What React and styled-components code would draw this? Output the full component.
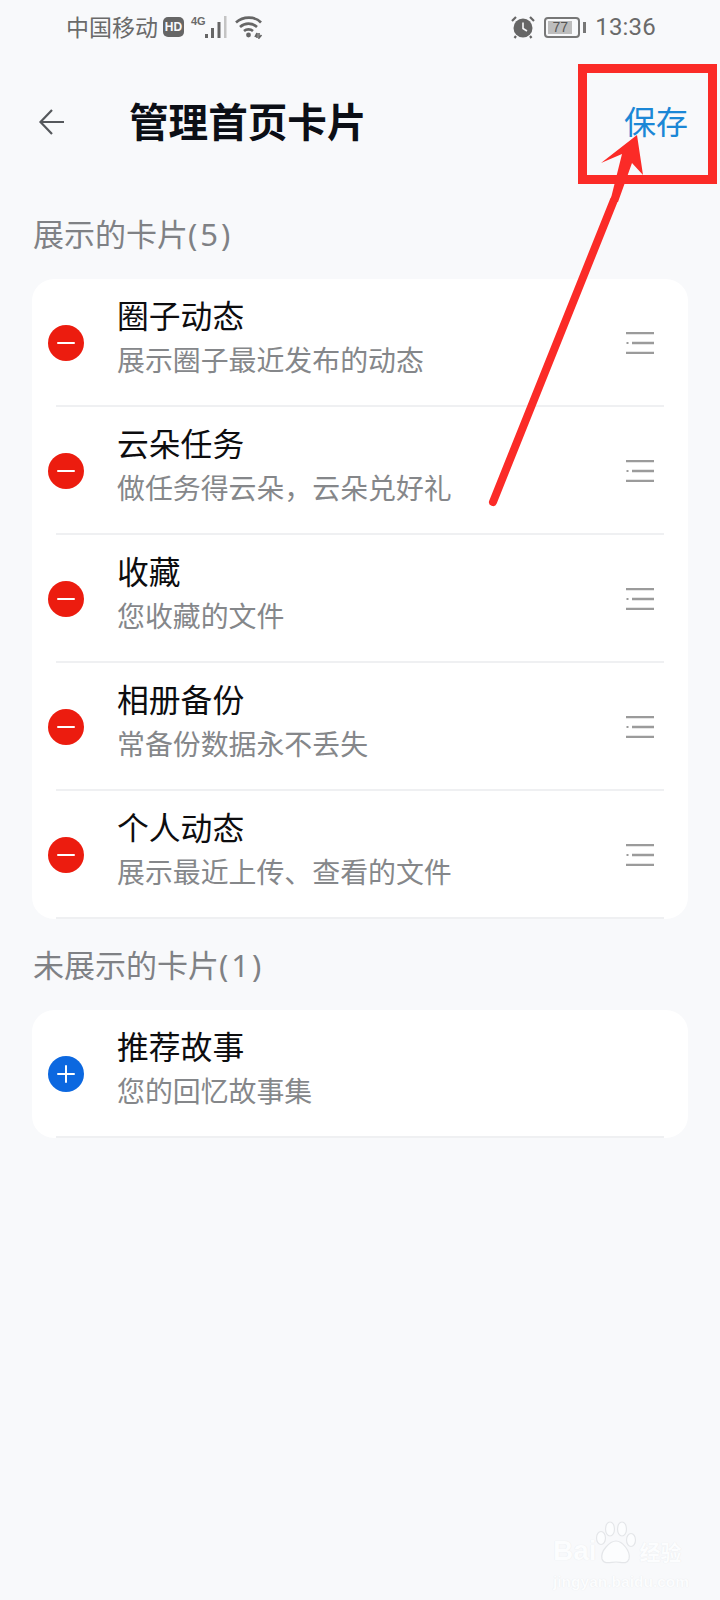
import React from "react";
import styled, { createGlobalStyle } from "styled-components";

const CJK = `"Noto Sans", "Noto Sans CJK SC", sans-serif`;

const GlobalStyle = createGlobalStyle`
  html, body {
    margin: 0;
    padding: 0;
    background: #f8f9fb;
  }
  * {
    box-sizing: border-box;
  }
`;

const Page = styled.div`
  position: relative;
  width: 720px;
  height: 1600px;
  overflow: hidden;
  background: #f8f9fb;
  font-family: ${CJK};
`;

const StatusBar = styled.div`
  display: flex;
  align-items: center;
  justify-content: space-between;
  height: 58px;
  padding: 6px 64px 10px 66px;
  color: #6a6a6a;
`;

const StatusGroup = styled.div`
  display: flex;
  align-items: center;
`;

const Carrier = styled.span`
  font-size: 23px;
  line-height: 30px;
`;

const HdBadge = styled.span`
  display: flex;
  align-items: center;
  justify-content: center;
  width: 21px;
  height: 20px;
  margin-left: 5px;
  border-radius: 5px;
  background: #666;
  color: #f8f9fb;
  font: 700 12px "Liberation Sans", sans-serif;
`;

const NetLabel = styled.span`
  align-self: flex-start;
  width: 13px;
  margin: 3px 0 0 7px;
  font: 700 11px "Liberation Sans", sans-serif;
`;

const WifiGap = styled.span`
  width: 7px;
`;

const Battery = styled.div`
  display: flex;
  align-items: center;
  width: 36px;
  height: 21px;
  margin-left: 9px;
  padding: 2px;
  border: 2px solid #777;
  border-radius: 4px;
  position: relative;
  &::after {
    content: "";
    position: absolute;
    right: -8px;
    top: 3px;
    width: 3px;
    height: 11px;
    background: #777;
  }
`;

const BatteryFill = styled.span`
  display: block;
  width: 24px;
  height: 13px;
  background: #bdbdbd;
  color: #555;
  font: 14px/13px "Liberation Sans", sans-serif;
  text-align: center;
`;

const Clock = styled.span`
  margin-left: 15px;
  font: 24px/30px Roboto, sans-serif;
  letter-spacing: 0.2px;
`;

const Header = styled.header`
  display: flex;
  align-items: center;
  height: 130px;
  padding: 0 32px 2px 38px;
`;

const BackButton = styled.button`
  display: flex;
  width: 28px;
  padding: 0;
  border: 0;
  background: none;
`;

const Title = styled.h1`
  flex: 1;
  margin: 0 0 0 63px;
  color: #0c0f16;
  font-size: 39.6px;
  font-weight: 700;
  line-height: 50px;
`;

const SaveButton = styled.button`
  padding: 0;
  border: 0;
  background: none;
  color: #1b87d6;
  font-family: ${CJK};
  font-size: 32px;
  line-height: 44px;
`;

const SectionLabel = styled.h2`
  height: 44px;
  margin: 24px 0 23px 33px;
  color: #7f8185;
  font-size: 31px;
  font-weight: 400;
  line-height: 44px;
`;

const Count = styled.span`
  letter-spacing: 3px;
`;

const Card = styled.section`
  margin: 0 32px;
  border-radius: 22px;
  background: #fff;
`;

const Row = styled.div`
  display: flex;
  align-items: center;
  height: 128px;
  margin: 0 24px;
  padding-top: 2px;
  border-bottom: 2px solid #eff0f2;
`;

const RoundAction = styled.span`
  position: relative;
  flex: none;
  width: 36px;
  height: 36px;
  margin-left: -8px;
  border-radius: 50%;
  background: ${(p) => (p.$add ? "#0c68e0" : "#ec1c0f")};

  &::before {
    content: "";
    position: absolute;
    left: 9px;
    top: 17px;
    width: 18px;
    height: 2px;
    border-radius: 1px;
    background: #fff;
  }

  &::after {
    content: "";
    display: ${(p) => (p.$add ? "block" : "none")};
    position: absolute;
    left: 17px;
    top: 9px;
    width: 2px;
    height: 18px;
    border-radius: 1px;
    background: #fff;
  }
`;

const RowText = styled.div`
  flex: 1;
  margin: 0 0 9px 33px;
`;

const RowTitle = styled.div`
  color: #0d0d0f;
  font-size: 31.8px;
  line-height: 44px;
`;

const RowSub = styled.div`
  color: #85878a;
  font-size: 27.9px;
  line-height: 45px;
`;

const DragHandle = styled.svg`
  flex: none;
  width: 28px;
  height: 22px;
  margin-right: 10px;
`;

// annotation pasted on top of the screenshot
const Annotation = styled.svg`
  position: absolute;
  left: 0;
  top: 0;
  pointer-events: none;
`;

const Watermark = styled.div`
  position: absolute;
  left: 553px;
  top: 1530px;
  width: 130px;
  color: #fcfdfe;
  text-shadow: 0 0 1px #e2e4e7;
`;

const WatermarkTop = styled.div`
  position: relative;
  display: flex;
  align-items: baseline;
  height: 42px;
  font: 700 28px/42px "Liberation Sans", sans-serif;
`;

const WatermarkCn = styled.span`
  margin-left: 2px;
  font: 700 21px/42px ${CJK};
`;

const WatermarkDu = styled.span`
  width: 38px;
  margin-left: 3px;
  font: 700 15px/42px "Liberation Sans", sans-serif;
  text-align: center;
`;

const WatermarkUrl = styled.div`
  font: 700 15.5px/20px "Liberation Sans", sans-serif;
  white-space: nowrap;
`;

const Paw = styled.svg`
  position: absolute;
  left: 42px;
  top: -9px;
`;

const SignalIcon = () => (
  <svg width="24" height="24" viewBox="0 0 24 24" fill="#666">
    <rect x="1" y="19" width="3" height="4" />
    <rect x="7" y="13" width="3" height="10" />
    <rect x="13.5" y="7" width="3" height="16" />
    <rect x="20" y="1" width="2.5" height="22" fill="#c4c4c4" />
  </svg>
);

const WifiIcon = () => (
  <svg width="28" height="24" viewBox="0 0 28 24" fill="none" stroke="#666" strokeWidth="2.6">
    <path d="M1 7.5C8 1 20 1 26 7.5" />
    <path d="M5 12C10 7.5 17 7.5 22 12" />
    <path d="M9 16C11.5 13.8 15.5 13.8 18 16" />
    <circle cx="13.5" cy="20" r="2.4" fill="#666" stroke="none" />
    <path d="M20 22l2-4v5M24 18v5l2.5-3" strokeWidth="1.6" />
  </svg>
);

const AlarmIcon = () => (
  <svg width="24" height="24" viewBox="0 0 24 24">
    <circle cx="12" cy="13" r="9.5" fill="#666" />
    <path d="M12 7.5V13.5L16 16" fill="none" stroke="#f8f9fb" strokeWidth="1.6" />
    <path d="M1 6L5 2M23 6L19 2M5 21L3.5 23M19 21L20.5 23" stroke="#666" strokeWidth="2.2" />
  </svg>
);

const HandleIcon = () => (
  <DragHandle viewBox="0 0 28 22">
    <path d="M0 1H28M6 11H28M0 21H28" stroke="#9b9b9b" strokeWidth="2.4" />
    <rect x="0.5" y="10" width="2" height="2" fill="#9b9b9b" />
  </DragHandle>
);

const shown = [
  { title: "圈子动态", sub: "展示圈子最近发布的动态" },
  { title: "云朵任务", sub: "做任务得云朵，云朵兑好礼" },
  { title: "收藏", sub: "您收藏的文件" },
  { title: "相册备份", sub: "常备份数据永不丢失" },
  { title: "个人动态", sub: "展示最近上传、查看的文件" },
];

export default function App() {
  return (
    <Page>
      <GlobalStyle />
      <StatusBar>
        <StatusGroup>
          <Carrier>中国移动</Carrier>
          <HdBadge>HD</HdBadge>
          <NetLabel>4G</NetLabel>
          <SignalIcon />
          <WifiGap />
          <WifiIcon />
        </StatusGroup>
        <StatusGroup>
          <AlarmIcon />
          <Battery>
            <BatteryFill>77</BatteryFill>
          </Battery>
          <Clock>13:36</Clock>
        </StatusGroup>
      </StatusBar>

      <Header>
        <BackButton aria-label="返回">
          <svg width="28" height="28" viewBox="0 0 28 28" fill="none" stroke="#55585c" strokeWidth="2.2">
            <path d="M26 14H3M14 2L2.5 14L14 26" />
          </svg>
        </BackButton>
        <Title>管理首页卡片</Title>
        <SaveButton>保存</SaveButton>
      </Header>

      <SectionLabel>
        展示的卡片<Count>(5)</Count>
      </SectionLabel>
      <Card>
        {shown.map((item) => (
          <Row key={item.title}>
            <RoundAction />
            <RowText>
              <RowTitle>{item.title}</RowTitle>
              <RowSub>{item.sub}</RowSub>
            </RowText>
            <HandleIcon />
          </Row>
        ))}
      </Card>

      <SectionLabel>
        未展示的卡片<Count>(1)</Count>
      </SectionLabel>
      <Card>
        <Row>
          <RoundAction $add />
          <RowText>
            <RowTitle>推荐故事</RowTitle>
            <RowSub>您的回忆故事集</RowSub>
          </RowText>
        </Row>
      </Card>

      <Annotation width="720" height="600" viewBox="0 0 720 600">
        <rect x="582.5" y="68.5" width="130" height="111" fill="none" stroke="#fb2b27" strokeWidth="9" />
        <path d="M493 502L614 200" stroke="#fb2b27" strokeWidth="8" strokeLinecap="round" />
        <path d="M637 135L601 163L622 154L610 202L618 202L632 163L643 175Z" fill="#fb2b27" />
      </Annotation>

      <Watermark>
        <WatermarkTop>
          <Paw width="46" height="44" viewBox="0 0 46 44" fill="#fcfdfe" stroke="#e4e6e9" strokeWidth="1.2">
            <ellipse cx="6" cy="17" rx="4.5" ry="6.5" />
            <ellipse cx="15" cy="8" rx="4.5" ry="7" />
            <ellipse cx="27" cy="8" rx="4.5" ry="7" />
            <ellipse cx="36" cy="19" rx="4.5" ry="6.5" />
            <path d="M21 20C27 20 36 30 34 38C32 44 26 41 21 41C16 41 9 44 7 38C5 30 15 20 21 20Z" />
          </Paw>
          Bai
          <WatermarkDu>du</WatermarkDu>
          <WatermarkCn>经验</WatermarkCn>
        </WatermarkTop>
        <WatermarkUrl>jingyan.baidu.com</WatermarkUrl>
      </Watermark>
    </Page>
  );
}
